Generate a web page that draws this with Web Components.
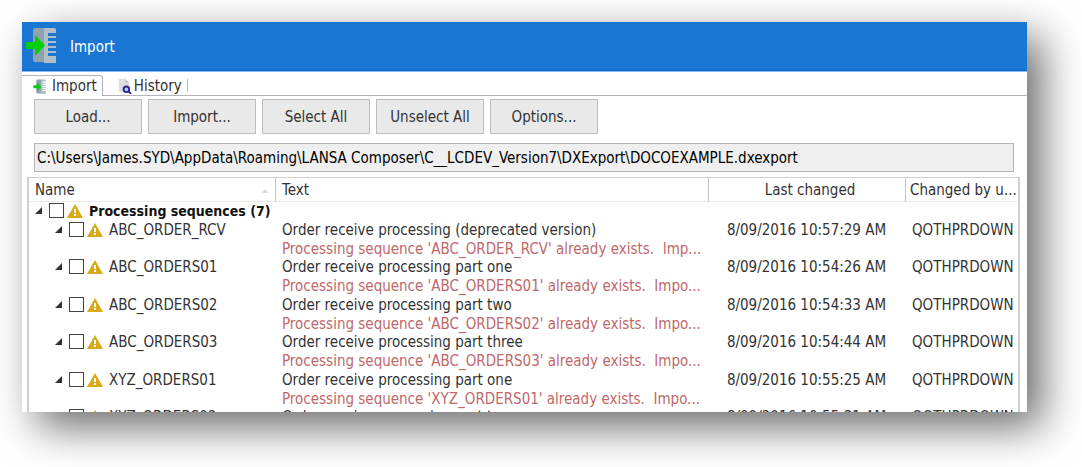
<!DOCTYPE html>
<html lang="en">

<head>
    <meta charset="utf-8">
    <title>Import</title>
    <style>
        body {
            margin: 0;
            background-color: #fff;
            color: #333;
            font: 15px/19px "DejaVu Sans Condensed", "DejaVu Sans", sans-serif;
        }
    </style>
</head>

<body>
    <app-window>
        <app-header>Import</app-header>
        <tab-strip>
            <tab-item selected>
                <import-icon slot="icon"></import-icon>Import
            </tab-item>
            <tab-item>
                <history-icon slot="icon"></history-icon>History
            </tab-item>
        </tab-strip>
        <tool-bar>
            <tool-button>Load...</tool-button>
            <tool-button>Import...</tool-button>
            <tool-button>Select All</tool-button>
            <tool-button>Unselect All</tool-button>
            <tool-button>Options...</tool-button>
        </tool-bar>
        <path-field value="C:\Users\James.SYD\AppData\Roaming\LANSA Composer\C__LCDEV_Version7\DXExport\DOCOEXAMPLE.dxexport"></path-field>
        <sequence-list></sequence-list>
    </app-window>

    <template id="app-window">
        <style>
            :host {
                display: block;
                box-sizing: border-box;
                height: 100vh;
                padding: 22px 55px 55px 22px;
                overflow: hidden;
            }

            main {
                height: 100%;
                overflow: hidden;
                background-color: #fff;
            }

            .frame {
                height: 100%;
                box-shadow: 15px 15px 40px rgba(0, 0, 0, 0.58);
            }
        </style>
        <div class="frame">
            <main><slot></slot></main>
        </div>
    </template>

    <template id="app-header">
        <style>
            :host {
                display: block;
            }

            header {
                box-sizing: border-box;
                height: 50px;
                display: flex;
                align-items: center;
                gap: 12px;
                padding: 0 4px;
                background-color: #1976d3;
                border-bottom: 1px solid #8abaf0;
                box-shadow: inset 0 -1px #0b66cc;
                color: #fff;
            }

            import-icon {
                width: 32px;
                height: 36px;
                margin-bottom: 3px;
            }

            h1 {
                margin: 0;
                padding-top: 2px;
                font-size: 15px;
                font-weight: normal;
            }
        </style>
        <header>
            <import-icon></import-icon>
            <h1><slot></slot></h1>
        </header>
    </template>

    <template id="import-icon">
        <style>
            :host {
                display: block;
            }

            svg {
                display: block;
                width: 100%;
                height: 100%;
            }
        </style>
        <svg viewBox="0 0 32 36" aria-hidden="true">
            <path fill="#8fa3ad" d="M9 1h11v34H9q-2 0-2-2V3q0-2 2-2z" />
            <path fill="#b0bec5" d="M18 1h10q2 0 2 2v3h-8v3h8v2h-8v3h8v2h-8v3h8v2h-8v3h8v2h-8v3h8v7q0 2-2 2H18z" />
            <path fill="#00d00c" d="M0 15h9V8l10 10.500L9 29v-7H0z" />
        </svg>
    </template>

    <template id="history-icon">
        <style>
            :host {
                display: block;
            }

            svg {
                display: block;
                width: 100%;
                height: 100%;
            }
        </style>
        <svg viewBox="0 0 15 16" aria-hidden="true">
            <path fill="#dedede" d="M1 0h7l4 4v10H1z" />
            <path fill="#c4c4c4" d="M8 0l4 4H8z" />
            <circle cx="9" cy="11" r="3" fill="#a9d4f5" stroke="#2e2494" stroke-width="2" />
            <path stroke="#2e2494" stroke-width="2" d="M11 13l3 3" />
        </svg>
    </template>

    <template id="warning-icon">
        <style>
            :host {
                display: flex;
                flex: none;
                width: 16px;
                height: 14px;
            }
        </style>
        <svg width="16" height="14" viewBox="0 0 16 14" aria-hidden="true">
            <path fill="#d9a916" d="M8 0l8 14H0z" />
            <path fill="#fff" d="M7 5h2v4H7zM7 10h2v2H7z" />
        </svg>
    </template>

    <template id="tab-strip">
        <style>
            :host {
                display: block;
            }

            nav {
                display: flex;
                height: 24px;
                padding-top: 3px;
                box-sizing: border-box;
                box-shadow: inset 0 -1px #b4b4b8;
            }
        </style>
        <nav role="tablist"><slot></slot></nav>
    </template>

    <template id="tab-item">
        <style>
            :host {
                display: block;
            }

            button {
                display: flex;
                align-items: center;
                gap: 4px;
                height: 21px;
                padding: 0 5px 0 10px;
                border: 0;
                background-color: transparent;
                color: inherit;
                font: inherit;
            }

            :host([selected]) button {
                background-color: #fff;
                border: 1px solid #b4b4b8;
                border-width: 1px 1px 0 0;
                border-radius: 0 3px 0 0;
            }

            :host(:not([selected])) button {
                padding: 1px 6px 0 14px;
                gap: 1px;
                background: linear-gradient(#b8b8b8, #b8b8b8) right 4px / 1px 13px no-repeat;
            }

            ::slotted([slot="icon"]) {
                width: 16px;
                height: 15px;
            }
        </style>
        <button role="tab" type="button">
            <slot name="icon"></slot>
            <span><slot></slot></span>
        </button>
    </template>

    <template id="tool-bar">
        <style>
            :host {
                display: flex;
                gap: 6px;
                padding: 3px 12px 9px;
            }
        </style>
        <slot></slot>
    </template>

    <template id="tool-button">
        <style>
            :host {
                display: block;
            }

            button {
                display: block;
                width: 108px;
                height: 35px;
                padding: 2px 0 0;
                border: 1px solid #bdbdbd;
                background-color: #e9e9e9;
                color: inherit;
                font: inherit;
                white-space: nowrap;
            }

            button:hover {
                background-color: #f2f2f2;
            }
        </style>
        <button type="button"><slot></slot></button>
    </template>

    <template id="path-field">
        <style>
            :host {
                display: block;
                padding: 0 13px 5px 12px;
            }

            input {
                display: block;
                box-sizing: border-box;
                width: 100%;
                height: 29px;
                padding: 0 2px;
                border: 1px solid #b4b4b8;
                background-color: #efefef;
                color: #000;
                font: inherit;
            }
        </style>
        <input type="text" readonly aria-label="Import file">
    </template>

    <template id="sequence-list">
        <style>
            :host {
                display: block;
                margin: 0 7px 0 5px;
                border: 1px solid #cfcfcf;
                border-width: 1px 2px 0;
            }

            table {
                width: 100%;
                table-layout: fixed;
                border-collapse: separate;
                border-spacing: 0;
            }

            .name {
                width: 247px;
            }

            .changed {
                width: 197px;
            }

            .user {
                width: 112px;
            }

            th {
                box-sizing: border-box;
                height: 24px;
                padding: 2px 4px 0 6px;
                border-right: 1px solid #c4c4c4;
                border-bottom: 1px solid #e8e8e8;
                font-weight: normal;
                text-align: left;
                white-space: nowrap;
            }

            th:last-child {
                padding: 2px 0 0 4px;
                border-right: 0;
            }

            th.changed {
                padding-left: 10px;
                text-align: center;
            }

            .sort {
                display: flex;
                align-items: center;
                justify-content: space-between;
            }

            .sort::after {
                content: "";
                border: 4px solid transparent;
                border-top: 0;
                border-bottom-color: #dcdcdc;
                margin-right: 2px;
            }

            td {
                padding: 0 0 0 6px;
                vertical-align: top;
                white-space: nowrap;
            }

            .item td.name {
                padding-left: 26px;
            }

            td.changed {
                padding: 0 2px 0 0;
                text-align: center;
            }

            .entry {
                display: flex;
                align-items: center;
                height: 19px;
            }

            .group label {
                color: #111;
                font-size: 14px;
                font-weight: bold;
            }

            label {
                display: flex;
                align-items: center;
            }

            label span {
                margin-left: 6px;
            }

            warning-icon {
                margin-bottom: 2px;
            }

            .expander {
                flex: none;
                width: 7px;
                height: 7px;
                margin: 0 7px 2px 0;
                padding: 0;
                border: 0;
                background-color: #333;
                clip-path: polygon(100% 0, 100% 100%, 0 100%);
            }

            input {
                appearance: none;
                box-sizing: border-box;
                flex: none;
                width: 15px;
                height: 15px;
                margin: 0 3px 2px 0;
                border: 1px solid #444;
                background-color: #fff;
            }

            input:checked {
                background-color: #1976d3;
            }

            p {
                margin: 0;
                white-space: pre;
            }

            .message {
                color: #c0676a;
            }

            /* every second row is one pixel shorter */
            .item:nth-child(even) .message {
                line-height: 18px;
            }
        </style>
        <table>
            <thead>
                <tr>
                    <th class="name"><div class="sort">Name</div></th>
                    <th>Text</th>
                    <th class="changed">Last changed</th>
                    <th class="user">Changed by u...</th>
                </tr>
            </thead>
            <tbody>
                <tr class="group">
                    <td colspan="4">
                        <div class="entry">
                            <button class="expander" type="button" aria-label="Collapse"></button>
                            <label><input type="checkbox"><warning-icon></warning-icon><span>Processing sequences (7)</span></label>
                        </div>
                    </td>
                </tr>
            </tbody>
        </table>
    </template>

    <script>
        const sequences = [
            ["ABC_ORDER_RCV", "Order receive processing (deprecated version)", "8/09/2016 10:57:29 AM", "Imp..."],
            ["ABC_ORDERS01", "Order receive processing part one", "8/09/2016 10:54:26 AM", "Impo..."],
            ["ABC_ORDERS02", "Order receive processing part two", "8/09/2016 10:54:33 AM", "Impo..."],
            ["ABC_ORDERS03", "Order receive processing part three", "8/09/2016 10:54:44 AM", "Impo..."],
            ["XYZ_ORDERS01", "Order receive processing part one", "8/09/2016 10:55:25 AM", "Impo..."],
            ["XYZ_ORDERS02", "Order receive processing part two", "8/09/2016 10:55:31 AM"]
        ];

        class TemplateElement extends HTMLElement {
            constructor() {
                super();
                this.attachShadow({ mode: "open" });
                const template = document.getElementById(this.localName);
                this.shadowRoot.appendChild(template.content.cloneNode(true));
            }
        }

        class PathField extends TemplateElement {
            connectedCallback() {
                this.shadowRoot.querySelector("input").value = this.getAttribute("value");
            }
        }

        class TabItem extends TemplateElement {
            connectedCallback() {
                this.shadowRoot.querySelector("button")
                    .setAttribute("aria-selected", this.hasAttribute("selected"));
            }
        }

        class SequenceList extends TemplateElement {
            connectedCallback() {
                const body = this.shadowRoot.querySelector("tbody");
                for (const [name, text, changed, tail] of sequences) {
                    const message = tail
                        ? `<p class="message">Processing sequence '${name}' already exists.  ${tail}</p>`
                        : "";
                    const row = document.createElement("tr");
                    row.className = "item";
                    row.innerHTML = `
                        <td class="name">
                            <div class="entry">
                                <button class="expander" type="button" aria-label="Collapse"></button>
                                <label><input type="checkbox"><warning-icon></warning-icon><span>${name}</span></label>
                            </div>
                        </td>
                        <td><p>${text}</p>${message}</td>
                        <td class="changed">${changed}</td>
                        <td class="user">QOTHPRDOWN</td>`;
                    body.appendChild(row);
                }
            }
        }

        for (const name of ["import-icon", "history-icon", "warning-icon", "app-window",
            "app-header", "tab-strip", "tool-bar", "tool-button"]) {
            customElements.define(name, class extends TemplateElement { });
        }
        customElements.define("tab-item", TabItem);
        customElements.define("path-field", PathField);
        customElements.define("sequence-list", SequenceList);
    </script>
</body>

</html>
